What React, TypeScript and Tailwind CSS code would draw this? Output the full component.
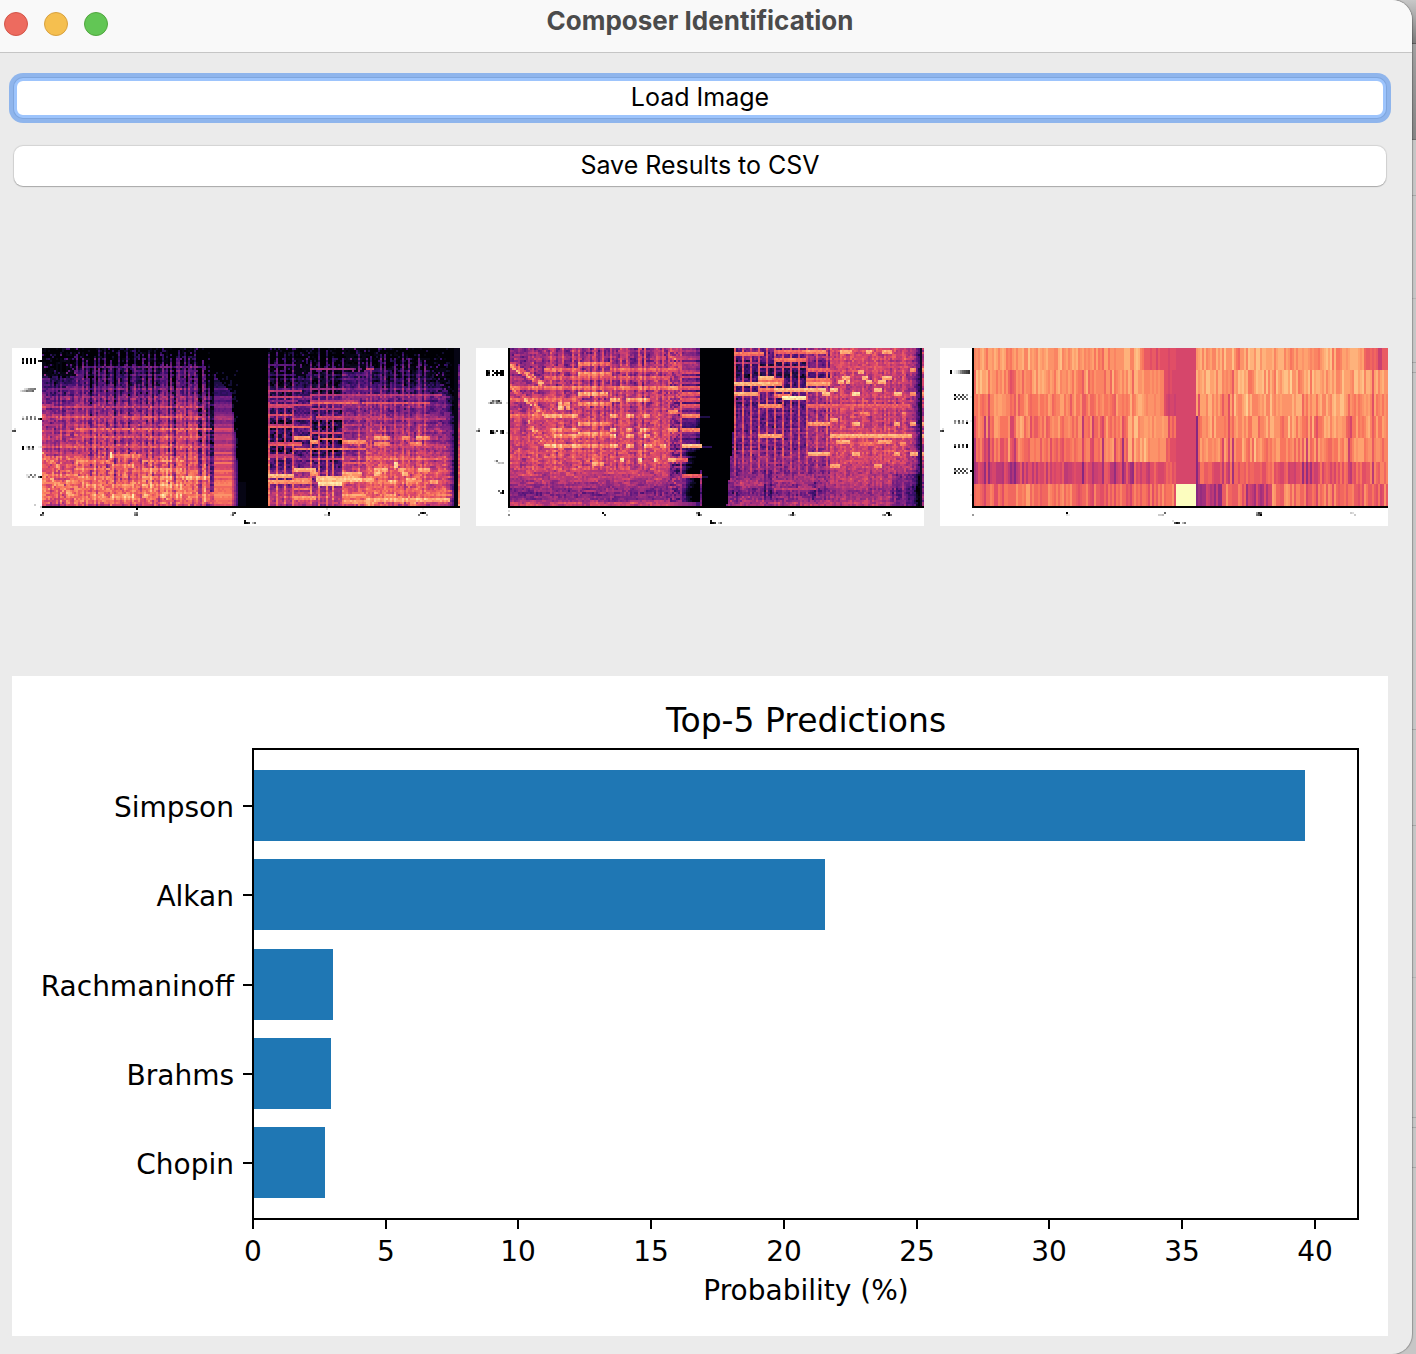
import React from "react";

/* ---------- Spectrogram rendering ---------- */

const COLS = 224;
const ROWS = 89;
const PLOT_ROWS = 79;
const LEVELS = 32;

const MAGMA: number[][] = [
  [0, 0, 4],
  [20, 14, 54],
  [59, 15, 112],
  [100, 26, 128],
  [140, 41, 129],
  [183, 55, 121],
  [222, 73, 104],
  [247, 112, 92],
  [254, 159, 109],
  [254, 207, 146],
  [252, 253, 191],
];

function magma(t: number): string {
  const p = Math.min(0.9999, Math.max(0, t)) * 10;
  const i = Math.floor(p);
  const f = p - i;
  const [a, b] = [MAGMA[i], MAGMA[i + 1]];
  return `rgb(${a.map((v, k) => Math.round(v + (b[k] - v) * f)).join(",")})`;
}

function noise(x: number, y: number, seed: number): number {
  let h = Math.imul(x + 101, 374761393) ^ Math.imul(y + 57, 668265263) ^ Math.imul(seed + 7, 1274126177);
  h = Math.imul(h ^ (h >>> 13), 1274126177);
  h = Math.imul(h ^ (h >>> 16), 2246822519);
  return ((h ^ (h >>> 15)) >>> 0) / 4294967296;
}

function ramp(stops: number[][], x: number): number {
  if (x <= stops[0][0]) return stops[0][1];
  for (let i = 1; i < stops.length; i++) {
    if (x <= stops[i][0]) {
      const [x0, y0] = stops[i - 1];
      const [x1, y1] = stops[i];
      return y0 + ((y1 - y0) * (x - x0)) / (x1 - x0);
    }
  }
  return stops[stops.length - 1][1];
}

/* start column, end column, row, level */
type Note = [number, number, number, number];

/* Notes at or above `wide` also cover the row below, slightly dimmer. */
function noteLevel(notes: Note[], c: number, r: number, wide: number): number {
  let best = 0;
  for (const [a, b, row, level] of notes) {
    if (c < a || c >= b) continue;
    if (r === row) best = Math.max(best, level);
    else if (r === row + 1 && level >= wide) best = Math.max(best, level - 0.05);
  }
  return best;
}

const linearNotes: Note[] = [
  [20, 80, 9, 0.3], [0, 80, 29, 0.54], [0, 80, 34, 0.6], [17, 85, 40, 0.68], [20, 80, 44, 0.62], [0, 84, 49, 0.62],
  [34, 50, 53, 0.74], [17, 34, 56, 0.74], [50, 72, 56, 0.72], [34, 46, 58, 0.76],
  [17, 34, 60, 0.73], [50, 70, 60, 0.74], [2, 18, 63, 0.73], [18, 34, 64, 0.76], [50, 66, 64, 0.76],
  [70, 84, 64, 0.84], [22, 30, 68, 0.8], [34, 46, 68, 0.8], [50, 70, 68, 0.8],
  [24, 32, 73, 0.8], [34, 46, 73, 0.83], [34, 46, 74, 0.83], [51, 54, 73, 0.84], [59, 62, 73, 0.84],
  [66, 70, 73, 0.82], [20, 50, 75, 0.74], [80, 84, 73, 0.8], [80, 84, 75, 0.8],
  [86, 96, 40, 0.6], [86, 96, 44, 0.5], [86, 96, 49, 0.55], [86, 95, 52, 0.65], [86, 96, 57, 0.7],
  [86, 96, 61, 0.72], [86, 96, 64, 0.7], [86, 97, 68, 0.74], [86, 96, 73, 0.76], [86, 96, 75, 0.72],
  [113, 127, 8, 0.26], [113, 127, 13, 0.22], [113, 130, 21, 0.52], [113, 130, 24, 0.55], [113, 128, 26, 0.4],
  [113, 134, 28, 0.58], [113, 126, 29, 0.56], [113, 126, 33, 0.62], [113, 134, 39, 0.66], [113, 126, 38, 0.5],
  [113, 130, 48, 0.66], [113, 130, 47, 0.56], [113, 126, 53, 0.5], [113, 126, 54, 0.48],
  [113, 126, 63, 0.86], [113, 134, 66, 0.8],
  [126, 134, 35, 0.56], [126, 134, 44, 0.8], [126, 150, 50, 0.72], [126, 137, 60, 0.86], [126, 134, 65, 0.73],
  [126, 134, 70, 0.7], [126, 137, 74, 0.8],
  [134, 156, 10, 0.46], [134, 150, 20, 0.42], [134, 160, 23, 0.52], [134, 158, 27, 0.66], [134, 158, 26, 0.5], [134, 150, 30, 0.5],
  [137, 150, 34, 0.6], [137, 150, 35, 0.5], [134, 150, 42, 0.58], [138, 150, 45, 0.7], [134, 138, 46, 0.78], [134, 138, 62, 0.8],
  [137, 158, 64, 0.84], [137, 160, 65, 0.9], [138, 150, 67, 0.95], [134, 150, 55, 0.55],
  [150, 162, 34, 0.55], [150, 160, 38, 0.55], [150, 162, 46, 0.78], [150, 162, 50, 0.7],
  [150, 162, 57, 0.64], [150, 160, 62, 0.84], [150, 162, 65, 0.8], [150, 162, 73, 0.8], [150, 162, 76, 0.8],
  [162, 166, 10, 0.5], [160, 200, 23, 0.5], [160, 194, 27, 0.62], [162, 200, 35, 0.52],
  [166, 174, 44, 0.78], [180, 184, 44, 0.78], [187, 194, 44, 0.78], [166, 174, 47, 0.76], [184, 190, 47, 0.76],
  [162, 200, 55, 0.68], [176, 178, 57, 0.95], [176, 178, 58, 0.9], [166, 173, 60, 0.84], [178, 182, 60, 0.82],
  [188, 194, 60, 0.84], [166, 170, 62, 0.86], [180, 183, 62, 0.86], [162, 166, 65, 0.86], [182, 187, 65, 0.86],
  [173, 177, 66, 0.86], [194, 198, 66, 0.84], [182, 185, 67, 0.78], [162, 205, 71, 0.68],
  [162, 204, 75, 0.84], [172, 177, 73, 0.8], [162, 166, 77, 0.82], [184, 187, 77, 0.82], [194, 205, 73, 0.73],
];

const linearAttacks = [17, 20, 22, 26, 28, 31, 34, 38, 42, 46, 50, 53, 56, 60, 64, 67, 68, 71, 73, 76, 80, 113, 117, 121, 125, 134, 138, 142, 145, 150, 158, 162, 164, 169, 171, 176, 180, 183, 188, 191];

function linearSpectrogram(c: number, r: number): number {
  if (c === 207 || c === 206) return 0.02;
  if (c === 208) return r < 8 ? 0.02 : 0.12 + r * 0.007 + noise(c, r, 3) * 0.18;
  const n = noise(c, r, 1);
  const cell = n - 0.5;
  const pair = noise(Math.floor(c / 2), r, 9) - 0.5;
  const column = noise(c, 0, 2) - 0.5;
  const row = noise(0, r, 3) - 0.5;

  if (c >= 98 && c < 113) return r > 66 && c < 102 ? 0.04 : 0;

  if (c >= 86 && c < 98) {
    const top = ramp([[86, 13], [94, 22], [96, 42], [98, 70]], c);
    if (r < top) return n > 0.8 && r > 10 ? 0.1 : 0;
    const fade = ramp([[94, 1], [96, 0.6], [98, 0.15]], c);
    const base = ramp([[17, 0.18], [34, 0.42], [42, 0.5], [60, 0.58], [68, 0.66], [78, 0.68]], r);
    return Math.max(base + row * 0.16 + cell * 0.05, noteLevel(linearNotes, c, r, 0.74)) * fade;
  }

  const attack = linearAttacks.includes(c);
  const section = c < 86 ? 0 : c < 162 ? 1 : 2;
  const top = ramp(
    [[0, 14], [16, 14], [17, 9], [75, 9], [80, 12], [86, 18], [113, 14], [126, 15], [134, 12], [160, 12], [163, 9], [194, 11], [200, 20], [206, 24]],
    c,
  );
  let v: number;
  if (section === 0) {
    v = ramp([[0, 0], [8, 0.04], [14, 0.18], [22, 0.33], [30, 0.42], [40, 0.49], [50, 0.52], [60, 0.58], [70, 0.65], [78, 0.58]], r);
    v += cell * 0.14 + pair * 0.16 + row * 0.14 + column * 0.2;
    if (r < 68 && c > 17 && noise(c, 5, 8) > 0.82) v -= 0.16;
    if (c >= 78 && c < 80 && r < 73) v -= 0.2;
    if (c >= 84 && r < 72) v -= 0.3;
  } else if (section === 1) {
    v = ramp([[8, 0], [20, 0.16], [30, 0.24], [50, 0.26], [66, 0.34], [78, 0.5]], r);
    v += cell * 0.14 + pair * 0.1 + row * 0.18;
    if (c >= 150) v += 0.16;
    if (c >= 126 && c < 134) v += 0.08;
    if (r > 34 && r < 62 && c < 150 && pair > 0) v -= 0.14;
  } else {
    v = ramp([[0, 0], [8, 0.04], [18, 0.2], [26, 0.34], [38, 0.44], [50, 0.54], [64, 0.6], [78, 0.6]], r);
    v += cell * 0.12 + pair * 0.14 + row * 0.14 + column * 0.14;
    v -= ramp([[195, 0], [202, 0.08], [204, 0.18], [206, 0.4]], c);
  }
  if (r < top) v = n > 0.84 ? v + 0.05 : v * 0.2;
  if (attack) {
    const level = ramp([[0, 0.16], [8, 0.25], [20, 0.42], [40, 0.58], [60, 0.66], [78, 0.68]], r);
    const start = Math.floor(noise(c, 1, 12) * 7);
    if (r >= start) v = Math.max(v, level + cell * 0.18 + row * 0.1);
  }
  const note = noteLevel(linearNotes, c, r, 0.74);
  if (note > 0) v = Math.max(v, note + cell * 0.1 + (c < 86 ? column * 0.26 : c >= 162 ? column * 0.1 : 0));
  if (c < 18) {
    const a = Math.abs(r - (53 + c * 0.8));
    const b = Math.abs(r - (63 + c * 0.65));
    if ((a < 1.4 && c < 9) || b < 1.6) v = Math.max(v, 0.72 + cell * 0.26);
  }
  if (c === 34 && r >= 52 && r < 55) v = 0.98;
  return v;
}

const melNotes: Note[] = [
  [17, 34, 10, 0.68], [17, 80, 14, 0.64], [0, 78, 19, 0.7], [0, 34, 25, 0.68], [24, 26, 27, 0.84], [27, 30, 27, 0.84], [24, 27, 29, 0.86],
  [28, 30, 29, 0.86], [17, 34, 33, 0.82], [0, 17, 33, 0.7], [20, 34, 40, 0.76], [22, 34, 43, 0.8],
  [17, 34, 48, 0.84], [34, 50, 7, 0.72], [34, 50, 12, 0.76], [34, 49, 22, 0.82],
  [34, 50, 27, 0.76], [34, 50, 37, 0.76], [34, 50, 42, 0.78], [34, 50, 48, 0.76],
  [41, 47, 57, 0.8], [50, 84, 10, 0.68], [50, 84, 19, 0.72], [50, 55, 25, 0.86], [58, 70, 25, 0.82],
  [50, 54, 33, 0.86], [58, 62, 33, 0.84], [66, 70, 33, 0.82], [50, 53, 40, 0.82], [58, 61, 40, 0.82],
  [65, 70, 40, 0.8], [50, 53, 43, 0.86], [58, 62, 43, 0.86], [67, 70, 43, 0.84], [50, 54, 48, 0.88],
  [58, 62, 48, 0.86], [67, 71, 48, 0.84], [75, 78, 48, 0.84], [55, 57, 55, 0.88], [64, 66, 55, 0.86],
  [72, 74, 55, 0.86], [79, 83, 55, 0.86], [82, 89, 55, 0.66], [79, 84, 19, 0.8], [79, 84, 31, 0.78], [79, 84, 40, 0.78],
  [86, 95, 4, 0.42], [86, 95, 8, 0.45], [86, 95, 12, 0.6], [86, 95, 14, 0.58], [86, 95, 17, 0.5], [77, 95, 19, 0.64], [86, 95, 22, 0.66],
  [86, 95, 25, 0.64], [86, 95, 28, 0.64], [86, 95, 33, 0.76], [86, 95, 40, 0.74],
  [86, 96, 48, 0.88], [86, 96, 63, 0.66],
  [95, 100, 34, 0.14], [95, 101, 49, 0.16], [95, 99, 64, 0.14],
  [112, 127, 2, 0.72], [112, 124, 7, 0.46], [112, 132, 17, 0.86], [112, 124, 22, 0.84],
  [124, 132, 14, 0.86], [124, 137, 15, 0.72], [124, 132, 20, 0.74], [124, 136, 28, 0.76],
  [124, 148, 9, 0.56], [124, 136, 43, 0.82], [132, 148, 1, 0.7], [132, 148, 5, 0.72],
  [132, 158, 20, 0.86], [136, 148, 24, 0.98], [132, 136, 17, 0.82], [132, 140, 23, 0.72],
  [148, 158, 1, 0.78], [148, 160, 10, 0.68], [148, 160, 15, 0.72],
  [148, 160, 17, 0.82], [156, 160, 22, 0.88], [148, 160, 28, 0.68],
  [149, 160, 37, 0.8], [149, 160, 52, 0.84], [160, 165, 58, 0.84],
  [182, 186, 58, 0.82], [160, 201, 43, 0.84], [160, 164, 20, 0.9], [171, 175, 22, 0.95],
  [192, 196, 22, 0.88], [200, 203, 22, 0.8], [160, 200, 28, 0.66], [165, 200, 9, 0.6],
  [171, 175, 37, 0.84], [192, 195, 37, 0.82], [200, 203, 37, 0.84],
  [171, 175, 52, 0.84], [192, 195, 52, 0.82], [200, 204, 52, 0.84],
  [163, 170, 46, 0.82], [184, 191, 46, 0.82], [160, 164, 35, 0.82], [165, 171, 1, 0.84], [178, 181, 1, 0.84],
  [186, 191, 1, 0.84], [166, 170, 14, 0.86], [164, 167, 16, 0.86], [168, 170, 16, 0.86], [174, 177, 11, 0.84],
  [176, 179, 14, 0.84], [178, 181, 16, 0.86], [184, 188, 16, 0.86], [186, 191, 14, 0.86], [182, 186, 20, 0.88],
  [175, 180, 32, 0.72], [196, 198, 32, 0.72], [175, 182, 47, 0.72], [195, 198, 47, 0.74], [200, 203, 10, 0.8],
  [132, 153, 70, 0.52], [112, 127, 68, 0.5], [132, 140, 66, 0.52],
];

const melAttacks = [20, 26, 31, 34, 42, 46, 50, 55, 58, 64, 67, 73, 76, 79, 85, 112, 116, 120, 124, 128, 132, 136, 140, 144, 148, 153, 158, 160, 165, 171, 176, 182, 187, 192, 196];

function melSpectrogram(c: number, r: number): number {
  const n = noise(c, r, 21);
  const cell = n - 0.5;
  const column = noise(c, 0, 22) - 0.5;
  const row = noise(0, r, 23) - 0.5;
  const pair = noise(Math.floor(c / 2), r, 26) - 0.5;
  const smear = noise(Math.floor(c / 4), r, 24) - 0.5;
  if (c === 205) return 0.06;
  if (c > 205) return Math.max(0.5 + cell * 0.25 - (r > 62 ? 0.12 : 0), noteLevel(melNotes, 200, r, 0.64));
  const startSilence = r > 60 ? 96 : 95;
  const endSilence = 112 - ramp([[30, 0], [78, 4]], r);
  if (c >= startSilence && c < endSilence) return noteLevel(melNotes, c, r, 0.64);

  let v: number;
  if (c < 79) {
    v = ramp([[0, 0.44], [12, 0.48], [24, 0.52], [50, 0.58], [62, 0.56], [66, 0.47], [70, 0.4], [75, 0.38], [77, 0.54], [78, 0.56]], r);
    v += cell * 0.12 + row * 0.06 + (r > 60 ? smear * 0.16 : column * 0.18 + pair * 0.16);
    if (r < 32 && pair > 0.32) v -= 0.18;
  } else if (c < 95) {
    v = ramp([[0, 0.4], [10, 0.42], [24, 0.34], [50, 0.28], [62, 0.24], [78, 0.28]], r);
    v += cell * 0.08 + row * 0.24;
    if (c < 85) v += 0.12 + cell * 0.22;
    if (r > 50 && c > 87) v -= (c - 87) * 0.05 + 0.08;
    if (r > 76) v = 0.3 + (95 - c) * 0.015;
    if (c > 92) v -= 0.1;
  } else if (c < 160) {
    v = ramp([[0, 0.3], [10, 0.24], [24, 0.26], [44, 0.32], [54, 0.38], [66, 0.42], [72, 0.36], [78, 0.5]], r);
    v += cell * 0.16 + row * 0.1 + smear * 0.1;
    if (c < 114) v -= 0.06;
    if (r > 62) v += column * 0.06;
    if ((c > 126 && c < 131 && r > 60 && r < 76) || (c > 150 && c < 154 && r > 66 && r < 76)) v -= 0.14;
    if (r > 6 && r < 15 && c > 112 && n > 0.4) v -= 0.14;
    if (c >= 148 && r < 50) v += 0.12;
  } else {
    v = ramp([[0, 0.54], [14, 0.52], [30, 0.5], [48, 0.55], [60, 0.52], [66, 0.48], [72, 0.43], [78, 0.5]], r);
    v += cell * 0.13 + pair * 0.08 + row * 0.08 + column * 0.12;
    if (c > 190 && r > 62) v -= 0.16;
    v -= ramp([[198, 0], [202, 0.08], [203, 0.25], [205, 0.4]], c);
  }
  if (melAttacks.includes(c)) {
    const level = ramp([[0, 0.6], [50, 0.62], [60, 0.52], [66, 0.42], [78, 0.4]], r);
    v = Math.max(v, level + cell * 0.16);
  }
  const note = noteLevel(melNotes, c, r, 0.64);
  if (note > 0) v = Math.max(v, note + cell * 0.1 + (c < 79 ? column * 0.2 : 0));
  if (c < 17) {
    const diagonals = [8 + c * 0.6, 19 + c * 0.8, 36 + (c - 8) * 1.3];
    if (diagonals.some((d, i) => Math.abs(r - d) < 1.7 && (i < 2 || c > 8))) v = Math.max(v, 0.7 + cell * 0.34);
  }
  return v;
}

const contrastBands = [0, 11, 23, 34, 45, 57, 68, 79];

function contrastSpectrogram(c: number, r: number): number {
  const band = contrastBands.findIndex((top, i) => r >= top && r < contrastBands[i + 1]);
  if (c >= 101 && c < 111) return band === 6 ? 1 : 0.585;
  const n = noise(c, band, 41);
  const shared = noise(c, 0, 42);
  const smooth = noise(Math.floor(c / 5), band, 43) - 0.5;
  const left = [0.78, 0.77, 0.75, 0.73, 0.7, 0.61, 0.7];
  const right = [0.78, 0.81, 0.79, 0.78, 0.75, 0.67, 0.7];
  let v = (c < 101 ? left : right)[band] + (n - 0.5) * 0.15 + smooth * 0.07;
  if (band > 0 && shared > 0.85) v -= [0, 0.07, 0.09, 0.12, 0.15, 0.14, 0.05][band];
  if (band === 5 && c < 76 && n > 0.82) v -= 0.15;
  if (band === 5 && c >= 111 && c < 185 && n > 0.8) v -= 0.15;
  if (band === 6 && c >= 111 && c < 124) v = 0.5 + (n - 0.5) * 0.16;
  if (band === 6 && c >= 136 && c < 149) v = 0.54 + (n - 0.5) * 0.2;
  if (c > 76 && c < 86 && band < 5) v = (c === 79 ? 0.7 : 0.81) + (n - 0.5) * 0.14;
  if (c >= 86 && c < 96 && band > 0 && band < 5) v = 0.77 + (n - 0.5) * 0.05;
  if (band === 0 && c > 82 && c < 101) v = ramp([[82, 0.74], [88, 0.62], [101, 0.57]], c) + (n - 0.5) * 0.08;
  if (band > 0 && band < 3 && c > 94 && c < 101) v = 0.59 + (n - 0.5) * 0.1;
  if (band >= 3 && band < 6 && c > 96 && c < 101) v = 0.65 + (n - 0.5) * 0.1;
  if (c === 111 && band > 2) v = 0.38;
  if (band === 0 && c > 194) v = c > 201 && c < 204 ? 0.56 : 0.66 + (n - 0.5) * 0.04;
  return v;
}

function buildPaths(offset: number, levelAt: (c: number, r: number) => number): string[] {
  const paths: string[] = Array(LEVELS).fill("");
  for (let r = 0; r < PLOT_ROWS; r++) {
    let start = offset;
    let current = -1;
    for (let x = offset; x <= COLS; x++) {
      const q = x < COLS ? Math.round(Math.min(1, Math.max(0, levelAt(x - offset, r))) * (LEVELS - 1)) : -1;
      if (q !== current) {
        if (current >= 0) paths[current] += `M${start} ${r}H${x}V${r + 1}H${start}Z`;
        start = x;
        current = q;
      }
    }
  }
  return paths;
}

/* x, y, pattern: one hex digit per cell, 0 = black, f = blank */
type Mark = [number, number, string];

const linearMarks: Mark[] = [
  [5, 5, "0f0f0f0"], [5, 6, "3f0f0f0"], [5, 7, "0f0f0f0"], [13, 6, "20"], [4, 21, "dba7886"], [6, 20, "dc9887"],
  [5, 35, "8e7f7f7"], [5, 34, "df8f6f9"], [13, 35, "40"], [5, 49, "0fc4e2f"], [5, 50, "0fe8d7f"], [13, 49, "ed"],
  [7, 63, "de6f8"], [7, 64, "e9f8d"], [13, 64, "60"], [11, 78, "c"], [0, 41, "54"], [1, 40, "d"], [14, 79, "c"],
  [14, 82, "f2"], [14, 83, "48"], [62, 80, "0"], [61, 82, "97"], [61, 83, "75"], [110, 82, "73"], [109, 83, "d5"],
  [158, 82, "0"], [156, 83, "cd4"], [204, 82, "303"], [203, 83, "7fffa"], [116, 86, "1"], [116, 87, "013fb6"], [157, 80, "d"], [205, 80, "e"],
];

const melMarks: Mark[] = [
  [5, 11, "03f0f0f00"], [5, 12, "00ff00000"], [5, 13, "03f0f0f00"], [7, 26, "d6a63d"], [6, 27, "c58c797"], [15, 27, "d"],
  [7, 41, "03d3f40"], [7, 42, "00aff50"], [15, 42, "d"], [9, 56, "d7f"], [10, 57, "ebcb"], [11, 71, "6f0"], [12, 72, "50"],
  [0, 41, "94"], [1, 40, "b"], [16, 81, "d"], [16, 83, "8"], [63, 82, "0"], [64, 83, "3"], [110, 82, "72"], [110, 83, "d08"],
  [158, 82, "1"], [156, 83, "c73c"], [205, 82, "30f"], [203, 83, "96f07"], [117, 86, "1"], [117, 87, "013fb6"],
];

const contrastMarks: Mark[] = [
  [5, 11, "0fedb86543"], [5, 12, "0fedb86543"],
  [7, 23, "0f5f4f9"], [7, 24, "c6f3e5f"], [7, 25, "0f5f4f6"],
  [7, 36, "8e5f8fb"], [7, 37, "9f7e9f0"], [7, 48, "6f4f3f0"], [7, 49, "0f3f5f0"],
  [7, 60, "3f3f5f7"], [7, 61, "a6f3f3f"], [7, 62, "0f5f5f6"],
  [0, 41, "53"], [1, 40, "d"], [15, 24, "e"], [15, 36, "e"], [15, 61, "0"], [15, 73, "e"],
  [16, 83, "9"], [63, 82, "0"], [63, 83, "de"], [112, 82, "6"], [109, 83, "ccb"],
  [158, 82, "935"], [158, 83, "750"], [205, 82, "cd"], [206, 83, "fc"], [116, 86, "d"], [117, 87, "513fb7"],
];

interface SpectrogramProps {
  label: string;
  offset: number;
  axis: boolean;
  paths: string[];
  marks: Mark[];
}

function Spectrogram({ label, offset, axis, paths, marks }: SpectrogramProps) {
  return (
    <svg role="img" aria-label={label} viewBox={`0 0 ${COLS} ${ROWS}`} shapeRendering="crispEdges" className="block h-auto w-full bg-white">
      {paths.map((d, i) => (d ? <path key={i} d={d} fill={magma(i / (LEVELS - 1))} /> : null))}
      <rect x={axis ? offset - 1 : offset} y={PLOT_ROWS} width={COLS} height="1" fill="#000" />
      {axis && <rect x={offset - 1} y="0" width="1" height={PLOT_ROWS} fill="#000" />}
      {marks.map(([x, y, cells]) =>
        cells.split("").map((g, i) =>
          g === "f" ? null : <rect key={`${x}-${y}-${i}`} x={x + i} y={y} width="1" height="1" fill={`#${g}${g}${g}`} />,
        ),
      )}
    </svg>
  );
}

const spectrograms: SpectrogramProps[] = [
  { label: "Linear spectrogram", offset: 15, axis: false, paths: buildPaths(15, linearSpectrogram), marks: linearMarks },
  { label: "Mel spectrogram", offset: 17, axis: true, paths: buildPaths(17, melSpectrogram), marks: melMarks },
  { label: "Spectral contrast", offset: 17, axis: true, paths: buildPaths(17, contrastSpectrogram), marks: contrastMarks },
];

/* ---------- Prediction chart ---------- */

const predictions = [
  { name: "Simpson", value: 39.64 },
  { name: "Alkan", value: 21.55 },
  { name: "Rachmaninoff", value: 3.02 },
  { name: "Brahms", value: 2.94 },
  { name: "Chopin", value: 2.72 },
];
const ticks = [0, 5, 10, 15, 20, 25, 30, 35, 40];
const LEFT = 241;
const UNIT = 26.54;

function PredictionChart() {
  return (
    <svg
      role="img"
      aria-label="Top-5 Predictions"
      viewBox="0 0 1376 660"
      className="block h-auto w-full bg-white font-['DejaVu_Sans',sans-serif] text-[28px]"
    >
      <text x="794" y="56" textAnchor="middle" className="text-[33px]">
        Top-5 Predictions
      </text>
      {predictions.map((p, i) => {
        const center = Math.round(129 + i * 89.3);
        return (
          <g key={p.name}>
            <rect x={LEFT} y={center - 35} width={p.value * UNIT} height="71" fill="#1f77b4" shapeRendering="crispEdges" />
            <rect x={LEFT - 10} y={center} width="10" height="2" />
            <text x="222" y={center + 12} textAnchor="end">
              {p.name}
            </text>
          </g>
        );
      })}
      {ticks.map((t) => (
        <g key={t}>
          <rect x={Math.round(LEFT + t * UNIT) - 1} y="543" width="2" height="10" />
          <text x={Math.round(LEFT + t * UNIT)} y="585" textAnchor="middle">
            {t}
          </text>
        </g>
      ))}
      <rect x={LEFT} y="73" width="1105" height="470" fill="none" stroke="#000" strokeWidth="2" />
      <text x="794" y="624" textAnchor="middle">
        Probability (%)
      </text>
    </svg>
  );
}

/* ---------- Window ---------- */

const lights = [
  { label: "Close", className: "border-[#d35549] bg-[#ed6b5f]" },
  { label: "Minimize", className: "border-[#d8a13f] bg-[#f5bf4f]" },
  { label: "Zoom", className: "border-[#51a63f] bg-[#62c655]" },
];

export default function App() {
  return (
    <div className="relative min-h-screen bg-[#c6c6c6] font-[Inter,sans-serif]">
      <div aria-hidden="true" className="absolute inset-y-0 right-0 flex w-6 flex-col">
        <div className="h-11 border-b border-[#5c5c5c] bg-linear-to-b from-[#c8c8c8] to-[#7b7b7b]" />
        <div className="h-24 border-b border-[#6e6e6e] bg-linear-to-b from-[#a0a0a0] to-[#858585]" />
        <div className="h-14 border-b border-[#a8a8a8]" />
        <div className="h-[103px] border-b border-[#b4b4b4]" />
        <div className="h-16 border-b border-[#a8a8a8]" />
        <div className="h-[10px] border-b border-[#a8a8a8]" />
        <div className="h-[357px] border-b border-[#a8a8a8]" />
        <div className="h-24 border-b border-[#a8a8a8]" />
        <div className="h-[152px] border-b border-[#b4b4b4]" />
        <div className="h-[140px] border-b border-[#a8a8a8]" />
        <div className="h-[10px] border-b border-[#a8a8a8]" />
        <div className="h-10 border-b border-[#a8a8a8]" />
      </div>

      <main className="relative mr-1 flex min-h-screen flex-col overflow-hidden rounded-r-[20px] bg-[#ebebeb] shadow-[0_0_1px_1px_rgba(0,0,0,0.25)]">
        <header className="grid h-[53px] border-b border-[#c5c5c5] bg-[#f9f9f9]">
          <div className="col-start-1 row-start-1 flex gap-4 pt-3 pl-1">
            {lights.map((l) => (
              <button key={l.label} type="button" aria-label={l.label} className={`size-6 rounded-full border ${l.className}`} />
            ))}
          </div>
          <h1 className="pointer-events-none col-start-1 row-start-1 pt-1 pr-3 text-center text-[26px] leading-[34px] font-bold text-[#4b4b4b]">
            Composer Identification
          </h1>
        </header>

        <div className="flex flex-col pt-[25px] pr-6 pb-[18px] pl-3">
          <div className="flex flex-col gap-7 px-0.5">
            <button
              type="button"
              className="h-10 rounded-[9px] border-3 border-[#9dc4fc] bg-white pb-0.5 text-[25px] leading-8 text-black shadow-[0_0_0_1px_#7fa6de,0_0_0_5px_#8fb5ec] outline-none"
            >
              Load Image
            </button>
            <button
              type="button"
              className="h-10 rounded-[9px] bg-white pb-0.5 text-[25px] leading-8 text-black shadow-[0_0_1px_1px_rgba(0,0,0,0.1),0_1px_1px_rgba(0,0,0,0.2)]"
            >
              Save Results to CSV
            </button>
          </div>

          <div className="mt-[162px] grid grid-cols-3 gap-4">
            {spectrograms.map((s) => (
              <Spectrogram key={s.label} {...s} />
            ))}
          </div>

          <div className="mt-[150px]">
            <PredictionChart />
          </div>
        </div>
      </main>
    </div>
  );
}
